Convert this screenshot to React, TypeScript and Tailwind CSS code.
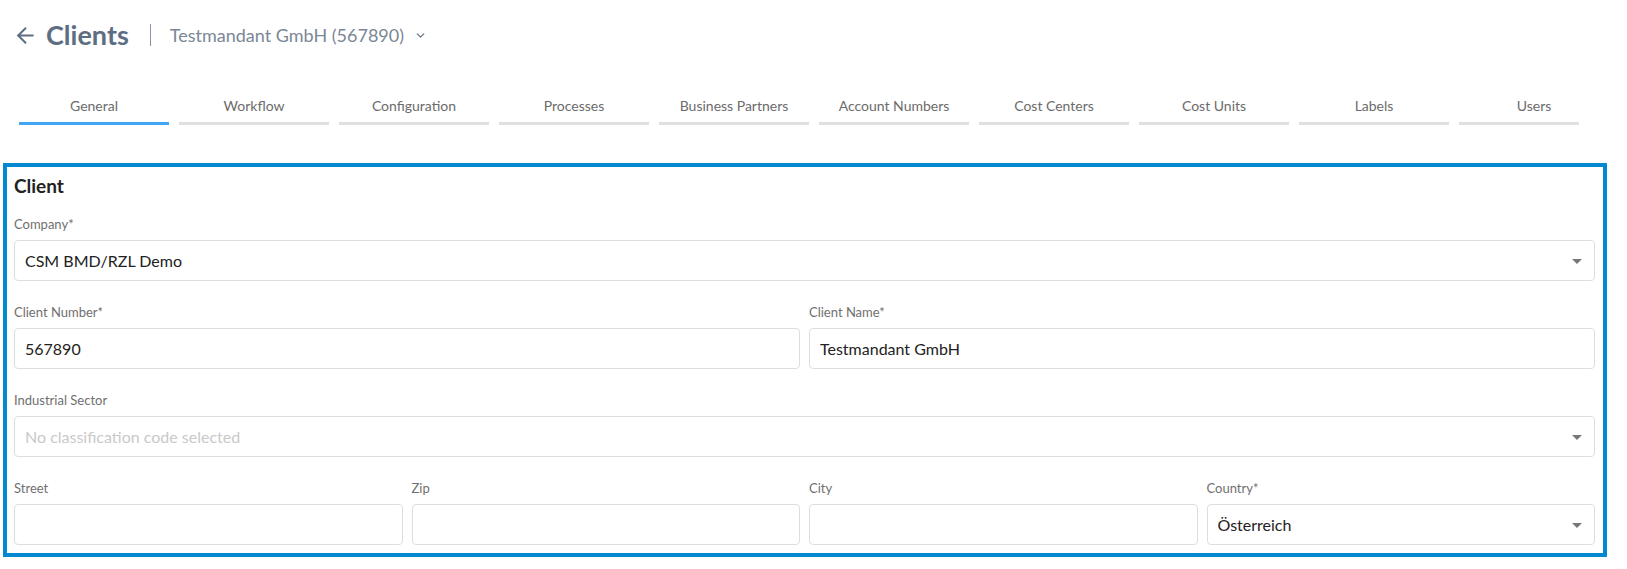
import { ArrowLeft, ChevronDown } from "lucide-react";

const tabs = [
  "General",
  "Workflow",
  "Configuration",
  "Processes",
  "Business Partners",
  "Account Numbers",
  "Cost Centers",
  "Cost Units",
  "Labels",
  "Users",
];

function Label({ children }: { children: React.ReactNode }) {
  return <p className="mb-2 text-[13px] leading-4 text-[#6f6f6f]">{children}</p>;
}

function Field({
  label,
  value,
  placeholder,
  select,
}: {
  label: string;
  value?: string;
  placeholder?: string;
  select?: boolean;
}) {
  return (
    <div className="min-w-0">
      <Label>{label}</Label>
      <div className="flex h-[41px] items-center rounded border border-[#dedede] bg-white pl-[10px] pr-3 pt-px">
        {value ? (
          <span className="flex-1 truncate text-base text-[#222]">{value}</span>
        ) : (
          <span className="flex-1 truncate text-base text-[#c9c9c9]">{placeholder}</span>
        )}
        {select && (
          <span className="h-0 w-0 border-x-[5px] border-t-[5px] border-x-transparent border-t-[#777]" />
        )}
      </div>
    </div>
  );
}

export default function App() {
  return (
    <div className="min-h-screen bg-white font-['Lato','Open_Sans',sans-serif]">
      <header className="box-content flex h-[30px] items-center pl-[13px] pt-5">
        <ArrowLeft size={25} strokeWidth={1.9} className="text-[#5e6e82]" />
        <h1 className="ml-[8px] text-[27px] font-bold leading-[30px] text-[#5e6e82]">Clients</h1>
        <span className="ml-[21px] h-[22px] w-px bg-[#8a95a3]" />
        <span className="ml-[19px] text-[18px] leading-6 text-[#7b8795]">Testmandant GmbH (567890)</span>
        <ChevronDown size={13} strokeWidth={2.5} className="ml-[10px] text-[#6b7785]" />
      </header>

      <nav className="ml-[19px] mt-[45px] flex w-[1560px] overflow-hidden">
        {tabs.map((t, i) => (
          <div key={t} className="mr-[10px] w-[150px] shrink-0">
            <p className="pt-px text-center text-[14px] leading-5 text-[#6b6b6b]">{t}</p>
            <div className={i === 0 ? "mt-[6px] h-[3px] bg-[#42a5f5]" : "mt-[6px] h-[3px] bg-[#e0e0e0]"} />
          </div>
        ))}
      </nav>

      <section className="ml-[3px] mr-5 mt-[38px] border-4 border-[#0288d1] pb-2 pl-[7px] pr-2 pt-[7px]">
        <h2 className="text-[19px] font-bold leading-6 text-[#222]">Client</h2>
        <div className="mt-[18px] flex flex-col gap-[23px]">
          <Field label="Company*" value="CSM BMD/RZL Demo" select />
          <div className="grid grid-cols-2 gap-x-[9px]">
            <Field label="Client Number*" value="567890" />
            <Field label="Client Name*" value="Testmandant GmbH" />
          </div>
          <Field label="Industrial Sector" placeholder="No classification code selected" select />
          <div className="grid grid-cols-4 gap-x-[9px]">
            <Field label="Street" />
            <Field label="Zip" />
            <Field label="City" />
            <Field label="Country*" value="Österreich" select />
          </div>
        </div>
      </section>
    </div>
  );
}
